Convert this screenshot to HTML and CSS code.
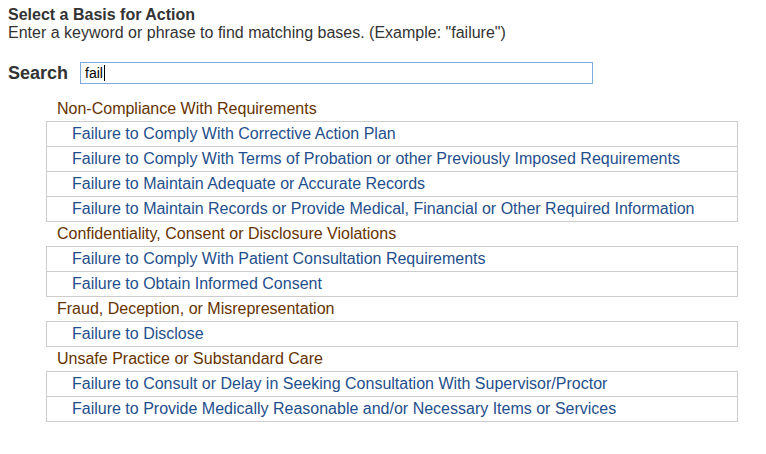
FILE: index.html
```html
<!DOCTYPE html>
<html>
<head>
<meta charset="utf-8">
<link rel="stylesheet" href="styles.css">
</head>
<body>
<div class="page">
  <div class="title">Select a Basis for Action</div>
  <div class="hint">Enter a keyword or phrase to find matching bases. (Example: "failure")</div>
  <div class="search-row">
    <label class="search-label">Search</label>
    <div class="search-input"><span class="typed">fail</span><span class="caret"></span></div>
  </div>
  <div class="results">
    <div class="cat">Non-Compliance With Requirements</div>
    <div class="group">
      <div class="item">Failure to Comply With Corrective Action Plan</div>
      <div class="item">Failure to Comply With Terms of Probation or other Previously Imposed Requirements</div>
      <div class="item">Failure to Maintain Adequate or Accurate Records</div>
      <div class="item">Failure to Maintain Records or Provide Medical, Financial or Other Required Information</div>
    </div>
    <div class="cat">Confidentiality, Consent or Disclosure Violations</div>
    <div class="group">
      <div class="item">Failure to Comply With Patient Consultation Requirements</div>
      <div class="item">Failure to Obtain Informed Consent</div>
    </div>
    <div class="cat">Fraud, Deception, or Misrepresentation</div>
    <div class="group">
      <div class="item">Failure to Disclose</div>
    </div>
    <div class="cat">Unsafe Practice or Substandard Care</div>
    <div class="group">
      <div class="item">Failure to Consult or Delay in Seeking Consultation With Supervisor/Proctor</div>
      <div class="item">Failure to Provide Medically Reasonable and/or Necessary Items or Services</div>
    </div>
  </div>
</div>
</body>
</html>
```
FILE: styles.css
```css
html, body {
  margin: 0;
  padding: 0;
  background: #ffffff;
}
body {
  font-family: "Liberation Sans", Arial, sans-serif;
  color: #333333;
}
.page {
  padding: 6px 8px 0 8px;
}
.title {
  font-size: 16px;
  font-weight: bold;
  line-height: 18px;
  color: #333333;
}
.hint {
  font-size: 16px;
  line-height: 18px;
  color: #333333;
}
.search-row {
  display: flex;
  align-items: center;
  margin-top: 20px;
}
.search-label {
  font-size: 18px;
  font-weight: bold;
  color: #333333;
  width: 72px;
}
.search-input {
  width: 507px;
  height: 20px;
  border: 1px solid #7eaadf;
  display: flex;
  align-items: center;
  padding-left: 4px;
  font-size: 14px;
  color: #000;
}
.caret {
  display: inline-block;
  width: 1px;
  height: 16px;
  background: #000;
  margin-left: 1px;
}
.results {
  margin-left: 38px;
  width: 692px;
  margin-top: 13px;
}
.cat {
  height: 24px;
  line-height: 24px;
  padding-left: 11px;
  font-size: 16px;
  color: #663300;
}
.group {
  border: 1px solid #cccccc;
}
.item {
  height: 24px;
  line-height: 24px;
  padding-left: 25px;
  font-size: 16px;
  color: #1f4f8c;
}
.item + .item {
  border-top: 1px solid #cccccc;
}
```
